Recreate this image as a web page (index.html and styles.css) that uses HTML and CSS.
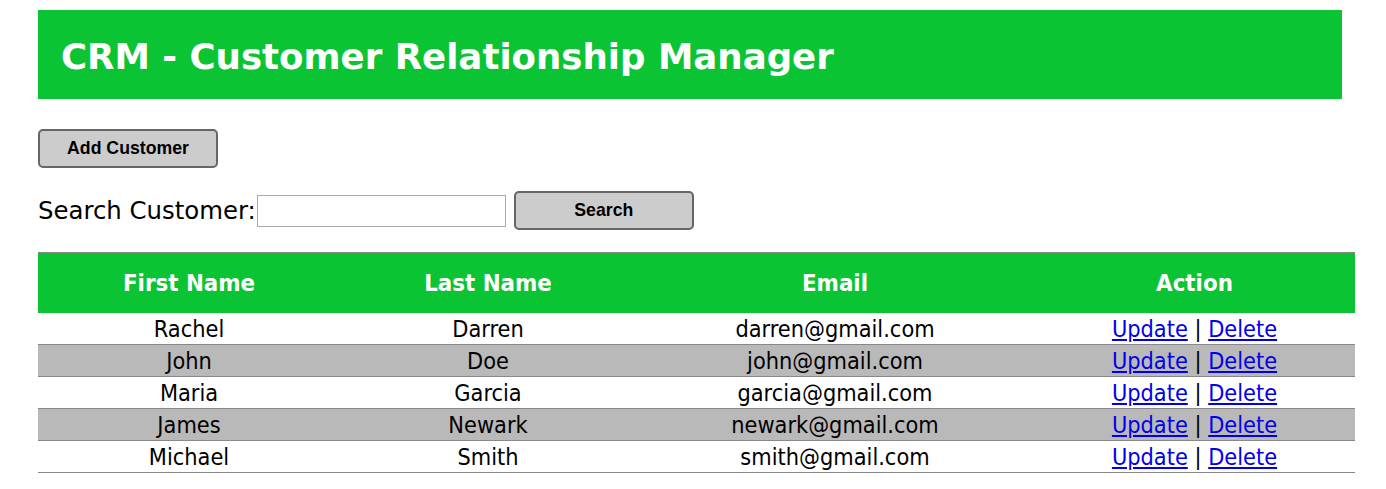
FILE: index.html
```html
<!DOCTYPE html>
<html>
<head>
<meta charset="utf-8">
<link rel="stylesheet" href="styles.css">
</head>
<body>
<div class="page">
  <header class="banner"><h1>CRM - Customer Relationship Manager</h1></header>
  <div class="actions"><button class="btn">Add Customer</button></div>
  <form class="search">
    <label class="search-label">Search Customer:</label>
    <input class="search-input" type="text">
    <button class="btn" type="button">Search</button>
  </form>
  <table class="grid">
    <thead>
      <tr><th class="c1">First Name</th><th class="c2">Last Name</th><th class="c3">Email</th><th class="c4">Action</th></tr>
    </thead>
    <tbody>
      <tr><td>Rachel</td><td>Darren</td><td>darren@gmail.com</td><td><a href="#">Update</a> | <a href="#">Delete</a></td></tr>
      <tr><td>John</td><td>Doe</td><td>john@gmail.com</td><td><a href="#">Update</a> | <a href="#">Delete</a></td></tr>
      <tr><td>Maria</td><td>Garcia</td><td>garcia@gmail.com</td><td><a href="#">Update</a> | <a href="#">Delete</a></td></tr>
      <tr><td>James</td><td>Newark</td><td>newark@gmail.com</td><td><a href="#">Update</a> | <a href="#">Delete</a></td></tr>
      <tr><td>Michael</td><td>Smith</td><td>smith@gmail.com</td><td><a href="#">Update</a> | <a href="#">Delete</a></td></tr>
    </tbody>
  </table>
</div>
</body>
</html>
```
FILE: styles.css
```css
html, body { margin: 0; padding: 0; background: #fff; }
.page { padding: 10px 0 0 38px; font-family: "DejaVu Sans Condensed", "DejaVu Sans", sans-serif; }
.banner { width: 1304px; height: 89px; background: #0BC434; display: flex; align-items: center; padding: 4px 0 0 23px; box-sizing: border-box; }
.banner h1 { margin: 0; color: #fff; font-family: "DejaVu Sans", sans-serif; font-weight: bold; font-size: 35.6px; line-height: 1; }
.actions { margin-top: 30px; }
.btn { width: 180px; height: 39px; background: #ccc; border: 2px solid #666; border-radius: 5px; font-family: "Liberation Sans", Arial, sans-serif; font-weight: bold; font-size: 17.7px; color: #000; padding: 0; }
.search { display: flex; align-items: center; margin-top: 23px; }
.search-label { font-family: "DejaVu Sans", sans-serif; font-size: 24.4px; color: #000; }
.search-input { width: 249px; height: 32px; box-sizing: border-box; border: 1px solid #aaa; margin: 0 8px 0 1px; padding: 2px 4px; font-size: 16px; }
.grid { margin-top: 22px; width: 1317px; border-collapse: collapse; font-size: 23.3px; }
.grid th { background: #0BC434; color: #fff; font-weight: bold; font-size: 23.8px; height: 60px; padding: 0; border-top: 1px solid #888; }
.c1 { width: 302px; } .c2 { width: 296px; } .c3 { width: 398px; } .c4 { width: 321px; }
.grid td { text-align: center; height: 31px; padding: 0; border-bottom: 1px solid #888; color: #000; line-height: 31px; }
.grid tbody tr:nth-child(even) td { background: #B9B9B9; }
.grid a { color: #0000EE; text-decoration: underline; }
.sep { word-spacing: 2px; }
```
